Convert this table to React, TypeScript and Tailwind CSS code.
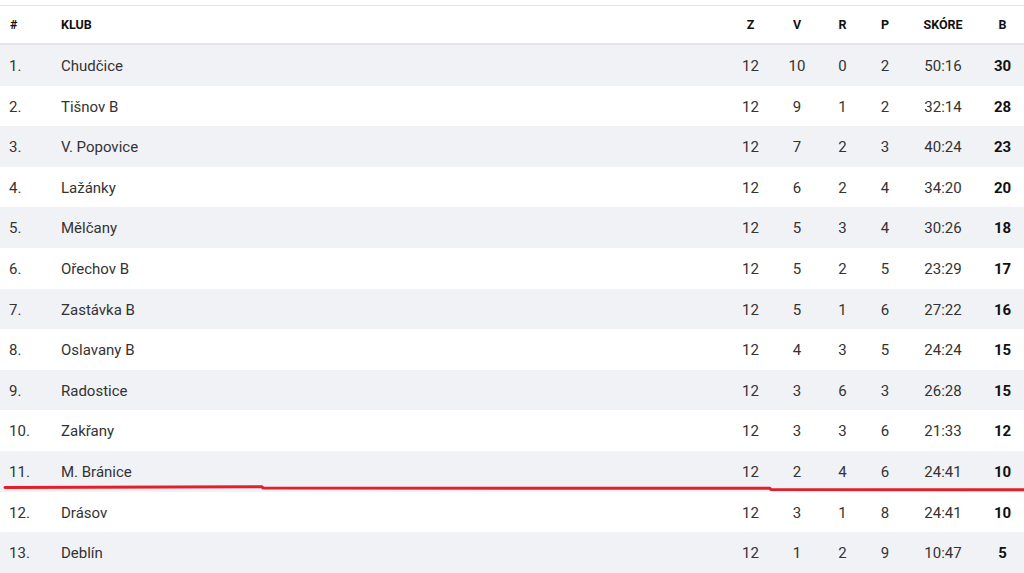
import React from "react";

type Row = { pos: number; club: string; z: number; v: number; r: number; p: number; score: string; b: number };

const rows: Row[] = [
  { pos: 1, club: "Chudčice", z: 12, v: 10, r: 0, p: 2, score: "50:16", b: 30 },
  { pos: 2, club: "Tišnov B", z: 12, v: 9, r: 1, p: 2, score: "32:14", b: 28 },
  { pos: 3, club: "V. Popovice", z: 12, v: 7, r: 2, p: 3, score: "40:24", b: 23 },
  { pos: 4, club: "Lažánky", z: 12, v: 6, r: 2, p: 4, score: "34:20", b: 20 },
  { pos: 5, club: "Mělčany", z: 12, v: 5, r: 3, p: 4, score: "30:26", b: 18 },
  { pos: 6, club: "Ořechov B", z: 12, v: 5, r: 2, p: 5, score: "23:29", b: 17 },
  { pos: 7, club: "Zastávka B", z: 12, v: 5, r: 1, p: 6, score: "27:22", b: 16 },
  { pos: 8, club: "Oslavany B", z: 12, v: 4, r: 3, p: 5, score: "24:24", b: 15 },
  { pos: 9, club: "Radostice", z: 12, v: 3, r: 6, p: 3, score: "26:28", b: 15 },
  { pos: 10, club: "Zakřany", z: 12, v: 3, r: 3, p: 6, score: "21:33", b: 12 },
  { pos: 11, club: "M. Bránice", z: 12, v: 2, r: 4, p: 6, score: "24:41", b: 10 },
  { pos: 12, club: "Drásov", z: 12, v: 3, r: 1, p: 8, score: "24:41", b: 10 },
  { pos: 13, club: "Deblín", z: 12, v: 1, r: 2, p: 9, score: "10:47", b: 5 },
];

const font = { fontFamily: "Roboto, 'Liberation Sans', sans-serif" };

export default function App() {
  return (
    <div className="relative w-[1024px] h-[573px] overflow-hidden bg-white text-[#333]" style={font}>
      <div className="h-[5px]" />
      <div className="border-t border-[#e6e7ea]">
        {/* Header */}
        <div className="flex items-center h-[39px] pt-[1px] border-b-2 border-[#e3e5ea] text-[12.5px] font-bold text-[#111] uppercase">
          <div className="w-[61px] pl-[10px]">#</div>
          <div className="flex-1">Klub</div>
          <div className="w-[47px] text-center">Z</div>
          <div className="w-[46px] text-center">V</div>
          <div className="w-[45px] text-center">R</div>
          <div className="w-[40px] text-center">P</div>
          <div className="w-[76px] text-center">Skóre</div>
          <div className="w-[43px] text-center">B</div>
        </div>
        {/* Body */}
        {rows.map((row, i) => (
          <div
            key={row.pos}
            className={`flex items-center h-[40.6px] pt-[2px] text-[15px] ${i % 2 === 0 ? "bg-[#f1f2f6]" : "bg-white"}`}
          >
            <div className="w-[61px] pl-[9px]">{row.pos}.</div>
            <div className="flex-1">{row.club}</div>
            <div className="w-[47px] text-center">{row.z}</div>
            <div className="w-[46px] text-center">{row.v}</div>
            <div className="w-[45px] text-center">{row.r}</div>
            <div className="w-[40px] text-center">{row.p}</div>
            <div className="w-[76px] text-center">{row.score}</div>
            <div className="w-[43px] text-center font-bold text-[#111]">{row.b}</div>
          </div>
        ))}
      </div>
      {/* hand-drawn red marker under M. Bránice */}
      <svg className="absolute left-0 top-[484px]" width="1024" height="10" viewBox="0 0 1024 10">
        <polyline
          points="5,3.5 262,2.8 263,4 770,4.3 771,5.6 1024,5.8"
          fill="none"
          stroke="#e41f2b"
          strokeWidth="3"
          strokeLinecap="round"
          strokeLinejoin="round"
        />
      </svg>
    </div>
  );
}
